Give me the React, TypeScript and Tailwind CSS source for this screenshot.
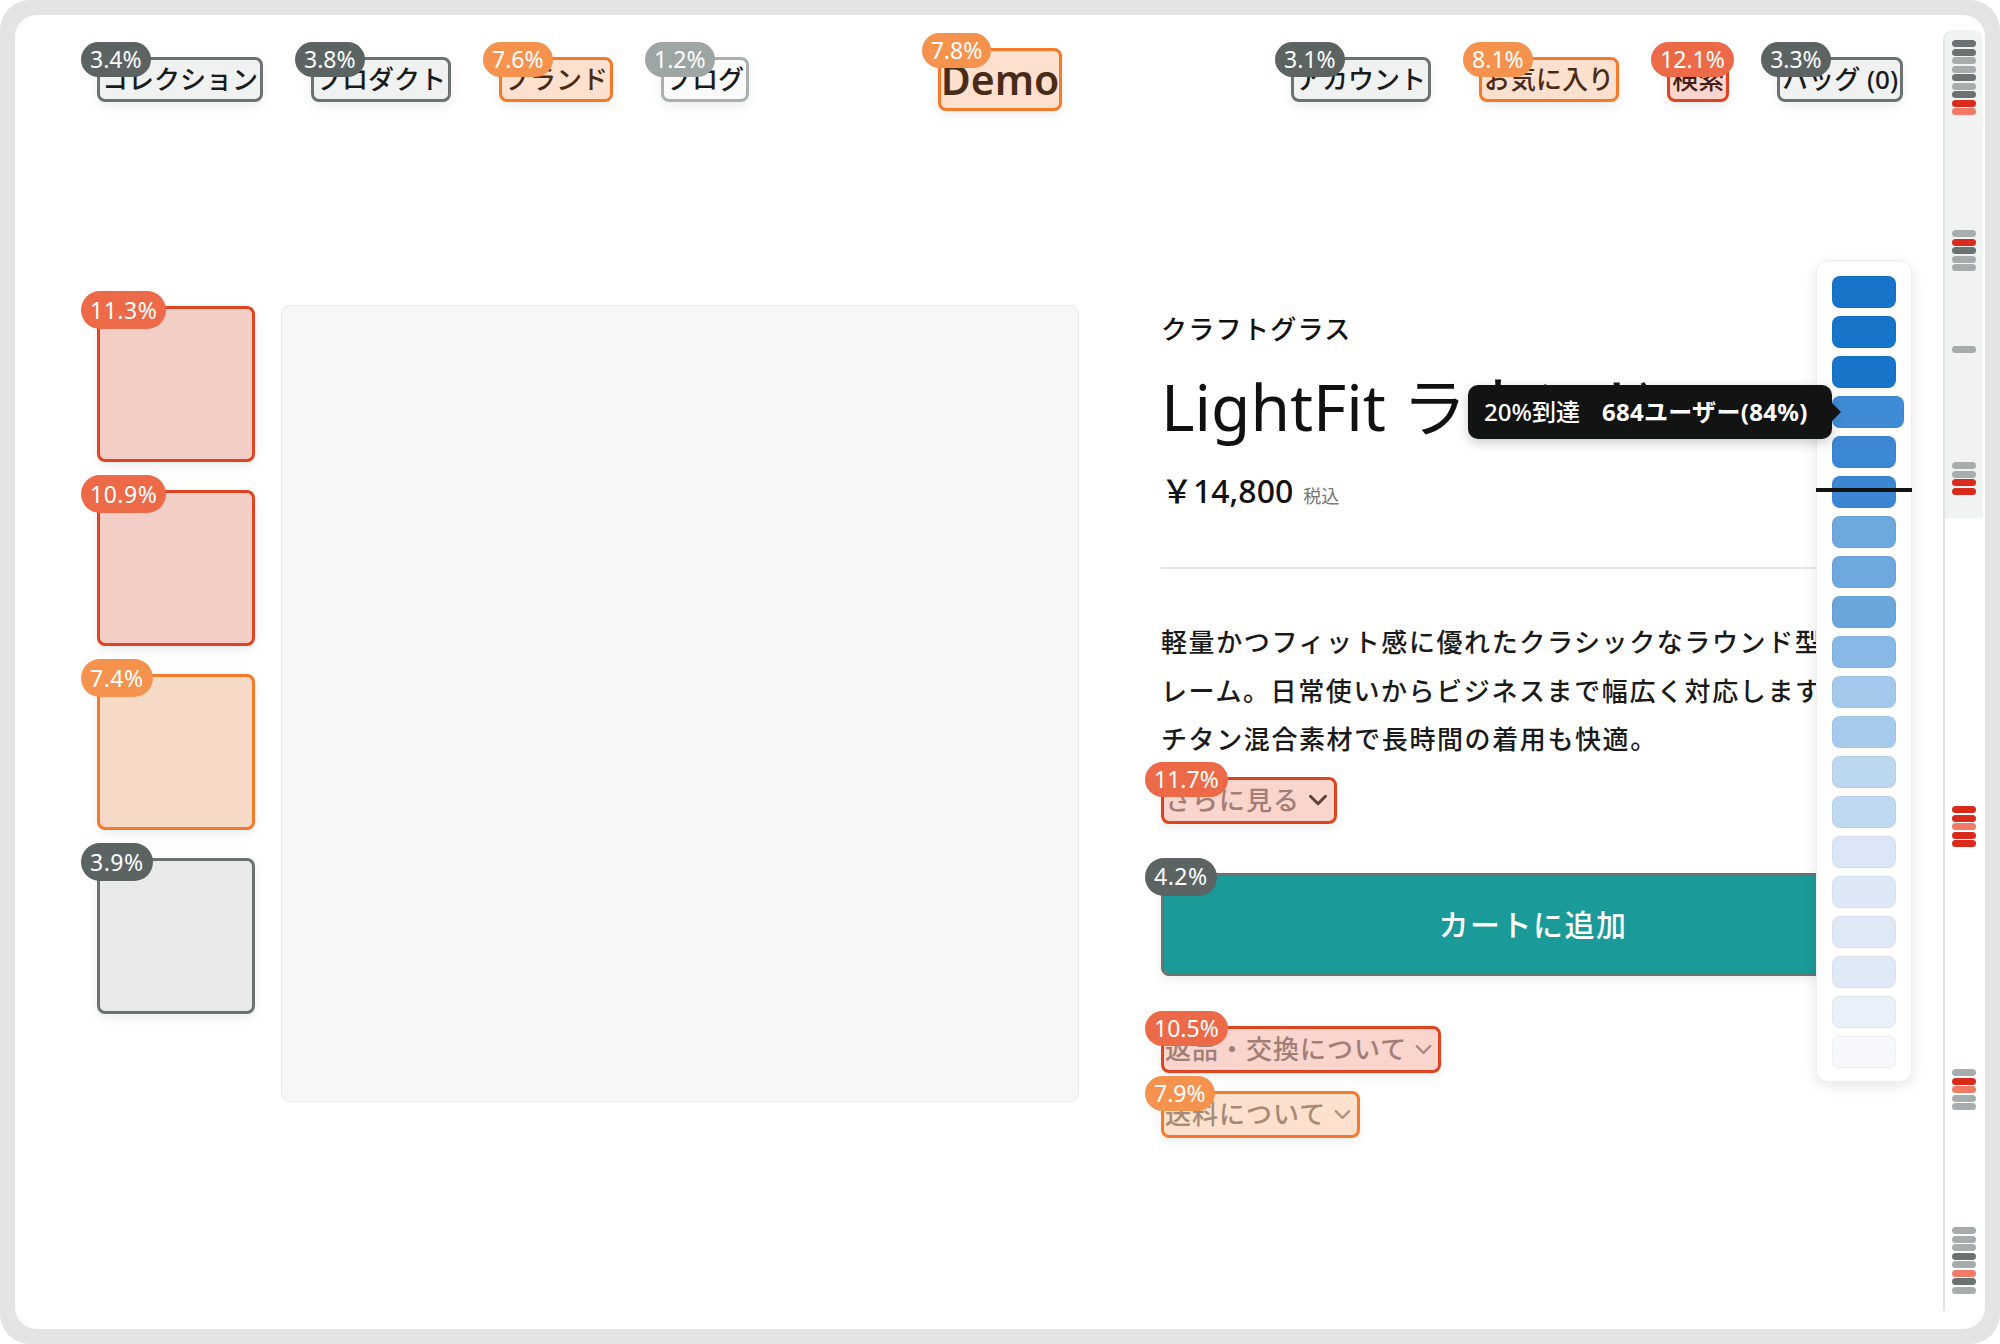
import React from 'react';
import { ChevronDown } from 'lucide-react';

type Level = 'red' | 'orange' | 'dark' | 'light';

const BORDER: Record<Level, string> = {
  red: 'border-[#e2431f]',
  orange: 'border-[#f47a2a]',
  dark: 'border-[#6c7272]',
  light: 'border-[#aab0b0]',
};
const FILL: Record<Level, string> = {
  red: 'bg-[rgba(232,78,45,0.24)]',
  orange: 'bg-[rgba(247,128,52,0.24)]',
  dark: 'bg-[rgba(112,120,120,0.1)]',
  light: 'bg-[rgba(170,176,176,0.06)]',
};
const BADGE: Record<Level, string> = {
  red: 'bg-[#ec6a48]',
  orange: 'bg-[#f5934e]',
  dark: 'bg-[#5b6363]',
  light: 'bg-[#9ea5a5]',
};

function Heat({
  level,
  pct,
  className = '',
  noFill = false,
  big = false,
  children,
}: {
  level: Level;
  pct: string;
  className?: string;
  noFill?: boolean;
  big?: boolean;
  children: React.ReactNode;
}) {
  return (
    <div className={`relative shrink-0 ${className}`}>
      {children}
      <div
        className={`pointer-events-none absolute inset-0 rounded-[8px] border-[3px] shadow-[0_4px_12px_rgba(0,0,0,0.07)] ${BORDER[level]} ${noFill ? '' : FILL[level]}`}
      />
      <div
        className={`absolute left-[-16px] top-[-15px] flex items-center rounded-full leading-none text-white ${BADGE[level]} ${big ? 'h-[38px] px-[9px] text-[23px] tracking-[0.5px]' : 'h-[35px] px-[9px] text-[23px]'}`}
      >
        {pct}
      </div>
    </div>
  );
}

function NavItem({ level, pct, label }: { level: Level; pct: string; label: string }) {
  return (
    <Heat level={level} pct={pct}>
      <div className="whitespace-nowrap px-[5px] py-[3px] text-[26px] font-medium leading-[39px] text-[#111]">{label}</div>
    </Heat>
  );
}

function LinkItem({
  level,
  pct,
  label,
  chevron,
  big = false,
  className = '',
}: {
  level: Level;
  pct: string;
  label: string;
  chevron: string;
  big?: boolean;
  className?: string;
}) {
  return (
    <Heat level={level} pct={pct} className={`self-start ${className}`}>
      <div className="flex items-center gap-[3px] whitespace-nowrap px-[4px] py-[3px] text-[26px] font-medium leading-[41px] tracking-[1px] text-[#8d8d8d]">
        <span>{label}</span>
        <ChevronDown size={big ? 30 : 27} strokeWidth={big ? 2.4 : 2} color={chevron} />
      </div>
    </Heat>
  );
}

const BARS = [
  '#1674c9',
  '#1674c9',
  '#1775ca',
  '#3f8bd6',
  '#3c88d4',
  '#3b87d3',
  '#6da8de',
  '#6ea8de',
  '#6aa5dc',
  '#88b8e5',
  '#a5c9ec',
  '#a7cbec',
  '#bcd8f1',
  '#bed9f1',
  '#dbe7f6',
  '#dde8f6',
  '#dfe9f6',
  '#e0eaf6',
  '#eaf0f9',
  '#f6f8fb',
];

const D = '#6b7272';
const L = '#a7adad';
const R = '#d92a1c';
const S = '#f27a66';

const DASH_GROUPS: { top: number; colors: string[] }[] = [
  { top: 10, colors: [D, D, L, L, D, L, D, R, S] },
  { top: 200, colors: [L, R, D, L, L] },
  { top: 316, colors: [L] },
  { top: 432, colors: [L, L, R, R] },
  { top: 776, colors: [R, R, S, R, R] },
  { top: 1039, colors: [L, R, S, L, L] },
  { top: 1197, colors: [L, L, L, D, L, S, D, L] },
];

export default function App() {
  return (
    <div className="h-[1344px] w-[2000px] bg-white font-['Noto_Sans','Noto_Sans_CJK_JP',sans-serif]">
      <div className="h-full rounded-[30px] bg-[#e3e5e5] p-[15px]">
        <div className="relative flex h-full overflow-hidden rounded-[22px] bg-white">
          {/* main page */}
          <div className="relative min-w-0 flex-1 pl-[82px] pr-[40px] pt-[33px]">
            <nav className="grid h-[63px] grid-cols-[1fr_auto_1fr] items-center">
              <div className="flex items-center gap-[48px]">
                <NavItem level="dark" pct="3.4%" label="コレクション" />
                <NavItem level="dark" pct="3.8%" label="プロダクト" />
                <NavItem level="orange" pct="7.6%" label="ブランド" />
                <NavItem level="light" pct="1.2%" label="ブログ" />
              </div>
              <Heat level="orange" pct="7.8%">
                <div className="px-[3px] py-[3px] text-[41px] font-semibold leading-[57px] text-[#111]">Demo</div>
              </Heat>
              <div className="flex items-center justify-end gap-[48px]">
                <NavItem level="dark" pct="3.1%" label="アカウント" />
                <NavItem level="orange" pct="8.1%" label="お気に入り" />
                <NavItem level="red" pct="12.1%" label="検索" />
                <NavItem level="dark" pct="3.3%" label="バッグ (0)" />
              </div>
            </nav>

            <div className="mt-[194px] flex items-start">
              <div className="flex w-[158px] shrink-0 flex-col gap-[28px] pt-[1px]">
                <Heat level="red" pct="11.3%" big>
                  <div className="h-[156px] w-[158px] rounded-[8px] bg-[#f6f6f6]" />
                </Heat>
                <Heat level="red" pct="10.9%" big>
                  <div className="h-[156px] w-[158px] rounded-[8px] bg-[#f6f6f6]" />
                </Heat>
                <Heat level="orange" pct="7.4%" big>
                  <div className="h-[156px] w-[158px] rounded-[8px] bg-[#f6f6f6]" />
                </Heat>
                <Heat level="dark" pct="3.9%" big>
                  <div className="h-[156px] w-[158px] rounded-[8px] bg-[#f6f6f6]" />
                </Heat>
              </div>

              <div className="ml-[26px] h-[797px] w-[798px] shrink-0 rounded-[8px] border border-[#ebebeb] bg-[#f7f7f7]" />

              <div className="ml-[82px] flex w-[744px] shrink-0 flex-col pt-[6px] text-[#111]">
                <div className="text-[26px] font-medium leading-[36px] tracking-[1.3px]">クラフトグラス</div>
                <h1 className="mt-[20px] whitespace-nowrap text-[64px] font-normal leading-[80px]">LightFit ラウンド</h1>
                <div className="mt-[24px] flex items-baseline gap-[10px] leading-[40px]">
                  <span className="text-[32px] font-medium">￥14,800</span>
                  <span className="text-[18px] text-[#777]">税込</span>
                </div>
                <div className="mt-[51px] h-[2px] w-full bg-[#e6e6e6]" />
                <p className="mt-[49px] whitespace-nowrap text-[26px] font-medium leading-[48.5px] tracking-[1.6px] text-[#1a1a1a]">
                  軽量かつフィット感に優れたクラシックなラウンド型フ
                  <br />
                  レーム。日常使いからビジネスまで幅広く対応します。
                  <br />
                  チタン混合素材で長時間の着用も快適。
                </p>
                <LinkItem level="red" pct="11.7%" label="さらに見る" chevron="#3a3a3a" big className="mt-[13px]" />
                <Heat level="dark" pct="4.2%" big noFill className="mt-[49px]">
                  <button className="flex h-[103px] w-full items-center justify-center rounded-[10px] bg-[#1a9a98] text-[30px] font-medium tracking-[1.5px] text-white">
                    カートに追加
                  </button>
                </Heat>
                <LinkItem level="red" pct="10.5%" label="返品・交換について" chevron="#999" className="mt-[50px]" />
                <LinkItem level="orange" pct="7.9%" label="送料について" chevron="#999" className="mt-[18px]" />
              </div>
            </div>

            {/* scroll-depth panel */}
            <div className="absolute left-[1801px] top-[245px] z-10 h-[822px] w-[96px] rounded-[12px] border border-[#eeeeee] bg-white shadow-[0_4px_14px_rgba(0,0,0,0.1)]">
              <div className="flex flex-col gap-[8px] pl-[15px] pt-[15px]">
                {BARS.map((c, i) => (
                  <div
                    key={i}
                    className={`h-[32px] rounded-[8px] shadow-[inset_0_0_0_1px_rgba(0,0,0,0.04)] ${i === 3 ? 'w-[72px]' : 'w-[64px]'}`}
                    style={{ backgroundColor: c }}
                  />
                ))}
              </div>
              <div className="absolute left-[-1px] right-[-1px] top-[227px] h-[4px] bg-[#121414]" />
            </div>

            {/* tooltip */}
            <div className="absolute left-[1453px] top-[370px] z-20 flex h-[54px] w-[364px] items-center gap-[22px] whitespace-nowrap rounded-[10px] bg-[#121414] pl-[16px] text-[24px] leading-none text-white shadow-[0_4px_12px_rgba(0,0,0,0.2)]">
              <span className="font-medium">20%到達</span>
              <span className="font-bold tracking-[0.3px]">684ユーザー(84%)</span>
              <div className="absolute right-[-9px] top-[18px] h-0 w-0 border-y-[9px] border-l-[9px] border-y-transparent border-l-[#121414]" />
            </div>
          </div>

          {/* minimap */}
          <div className="relative mb-[18px] mr-[2px] mt-[15px] w-[40px] shrink-0 overflow-hidden rounded-t-[10px] border-l-2 border-[#e1e3e3] bg-white">
            <div className="h-[488px] bg-[#f1f2f2]" />
            {DASH_GROUPS.map((g, gi) => (
              <div key={gi} className="absolute left-[7px] flex flex-col gap-[1.5px]" style={{ top: g.top }}>
                {g.colors.map((c, i) => (
                  <div key={i} className="h-[7px] w-[24px] rounded-full" style={{ backgroundColor: c }} />
                ))}
              </div>
            ))}
          </div>
        </div>
      </div>
    </div>
  );
}
